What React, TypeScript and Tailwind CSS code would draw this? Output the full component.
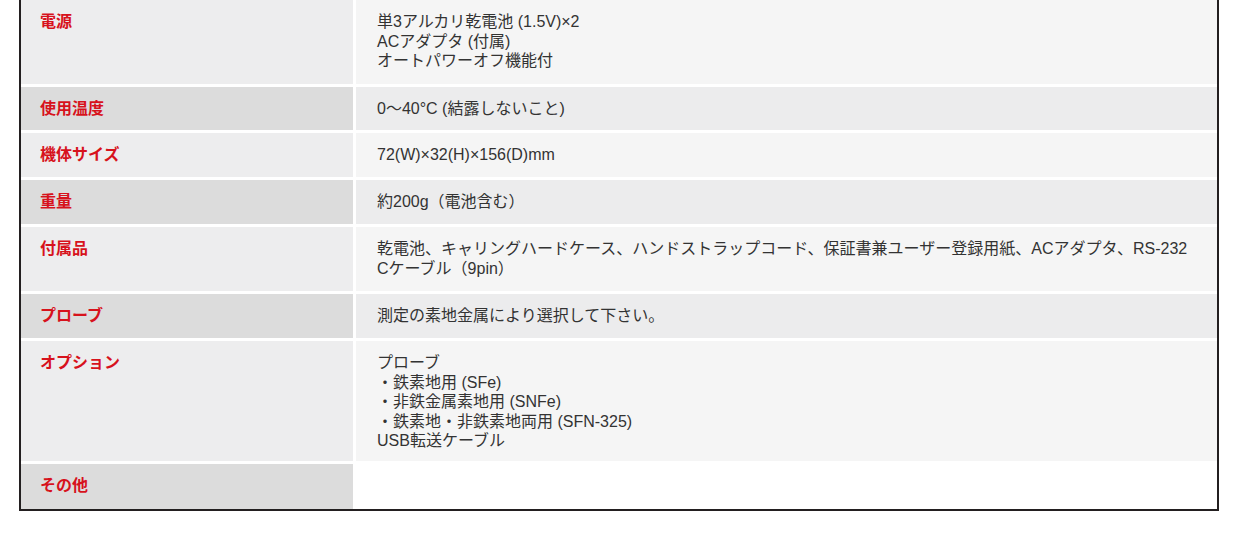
import React from "react";

type Row = { label: string; lines: string[]; dark: boolean; h: string; blank?: boolean };

const rows: Row[] = [
  {
    label: "電源",
    lines: ["単3アルカリ乾電池 (1.5V)×2", "ACアダプタ (付属)", "オートパワーオフ機能付"],
    dark: false,
    h: "h-[84px]",
  },
  { label: "使用温度", lines: ["0〜40°C (結露しないこと)"], dark: true, h: "h-[43px]" },
  { label: "機体サイズ", lines: ["72(W)×32(H)×156(D)mm"], dark: false, h: "h-[44px]" },
  { label: "重量", lines: ["約200g（電池含む）"], dark: true, h: "h-[44px]" },
  {
    label: "付属品",
    lines: [
      "乾電池、キャリングハードケース、ハンドストラップコード、保証書兼ユーザー登録用紙、ACアダプタ、RS-232",
      "Cケーブル（9pin）",
    ],
    dark: false,
    h: "h-[64px]",
  },
  { label: "プローブ", lines: ["測定の素地金属により選択して下さい。"], dark: true, h: "h-[44px]" },
  {
    label: "オプション",
    lines: [
      "プローブ",
      "・鉄素地用 (SFe)",
      "・非鉄金属素地用 (SNFe)",
      "・鉄素地・非鉄素地両用 (SFN-325)",
      "USB転送ケーブル",
    ],
    dark: false,
    h: "h-[120px]",
  },
  { label: "その他", lines: [], dark: true, h: "h-[45px]", blank: true },
];

export default function App() {
  return (
    <div
      className="min-h-screen w-full bg-white"
      style={{ fontFamily: '"Liberation Sans", "Noto Sans CJK JP", sans-serif' }}
    >
      <div className="ml-[19px] w-[1200px] border-x-2 border-b-2 border-[#231f20]">
        <div className="grid grid-cols-[332px_1fr] gap-[3px] bg-white">
          {rows.map((row) => (
            <React.Fragment key={row.label}>
              <div
                className={`${row.h} px-[19px] pt-3 text-[16px] leading-[19.5px] font-bold text-[#d7121c] ${
                  row.dark ? "bg-[#dcdcdc]" : "bg-[#ededee]"
                }`}
              >
                {row.label}
              </div>
              <div
                className={`${row.h} px-[21px] pt-3 text-[16px] leading-[19.5px] text-[#333333] whitespace-nowrap ${
                  row.blank ? "bg-white" : row.dark ? "bg-[#ececed]" : "bg-[#f5f5f5]"
                }`}
              >
                {row.lines.map((line, i) => (
                  <div key={i}>{line}</div>
                ))}
              </div>
            </React.Fragment>
          ))}
        </div>
      </div>
    </div>
  );
}
